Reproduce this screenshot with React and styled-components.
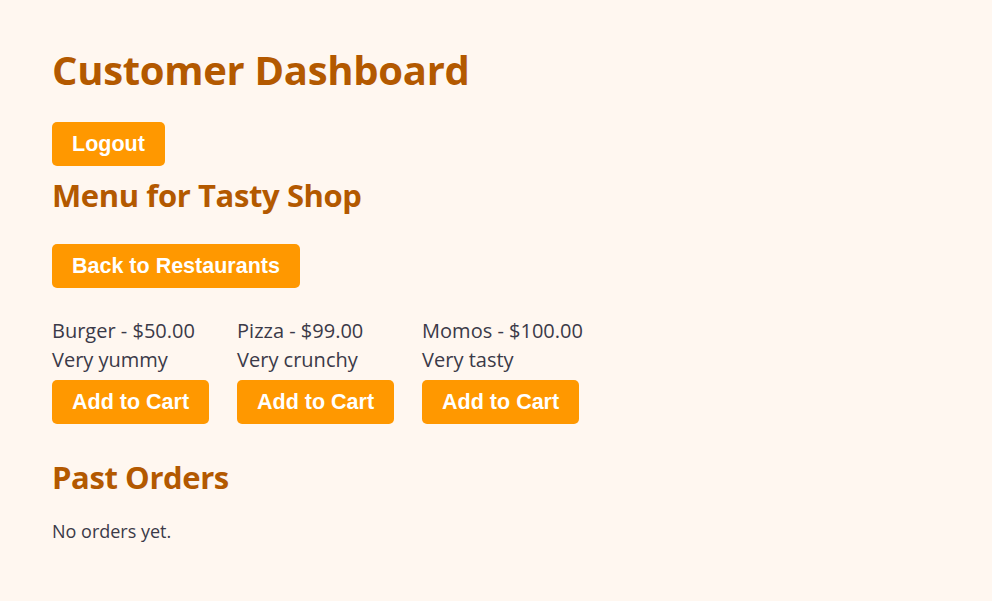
import React from 'react';
import styled, { createGlobalStyle } from 'styled-components';

const GlobalStyle = createGlobalStyle`
  body {
    margin: 0;
    background: #fff7f0;
    font-family: 'Open Sans', 'Noto Sans', sans-serif;
  }
`;

const Page = styled.div`
  padding: 40px 52px;
  color: #3b3a48;
`;

const Title = styled.h1`
  margin: 0 0 22px;
  font-size: 40px;
  line-height: 60px;
  font-weight: 700;
  color: #b35900;
  letter-spacing: -0.3px;
`;

const Heading = styled.h2`
  margin: ${(props) => props.margin || '0'};
  font-size: 31px;
  line-height: 40px;
  font-weight: 700;
  color: #b35900;
  letter-spacing: -0.4px;
`;

const Button = styled.button`
  display: block;
  margin-top: ${(props) => props.offset || '0'};
  padding: 10px 20px;
  border: none;
  border-radius: 5px;
  background-color: #ff9800;
  color: #fff;
  font-family: 'Liberation Sans', Arial, sans-serif;
  font-size: 21.5px;
  font-weight: 700;
  line-height: 24px;
  cursor: pointer;
`;

const MenuList = styled.div`
  display: flex;
  gap: 28px;
  margin-top: 28px;
`;

const MenuItem = styled.div`
  display: flex;
  flex-direction: column;
  align-items: flex-start;
`;

const ItemLine = styled.div`
  font-size: 20px;
  line-height: 29px;
`;

const Empty = styled.p`
  margin: 22px 0 0;
  font-size: 18px;
  line-height: 24px;
`;

const items = [
  { name: 'Burger', price: 50, desc: 'Very yummy' },
  { name: 'Pizza', price: 99, desc: 'Very crunchy' },
  { name: 'Momos', price: 100, desc: 'Very tasty' },
];

const App = () => {
  return (
    <>
      <GlobalStyle />
      <Page>
        <Title>Customer Dashboard</Title>
        <Button>Logout</Button>
        <Heading margin="9px 0 29px">Menu for Tasty Shop</Heading>
        <Button>Back to Restaurants</Button>
        <MenuList>
          {items.map((item) => (
            <MenuItem key={item.name}>
              <ItemLine>
                {item.name} - ${item.price.toFixed(2)}
              </ItemLine>
              <ItemLine>{item.desc}</ItemLine>
              <Button offset="6px">Add to Cart</Button>
            </MenuItem>
          ))}
        </MenuList>
        <Heading margin="33px 0 0">Past Orders</Heading>
        <Empty>No orders yet.</Empty>
      </Page>
    </>
  );
};

export default App;
